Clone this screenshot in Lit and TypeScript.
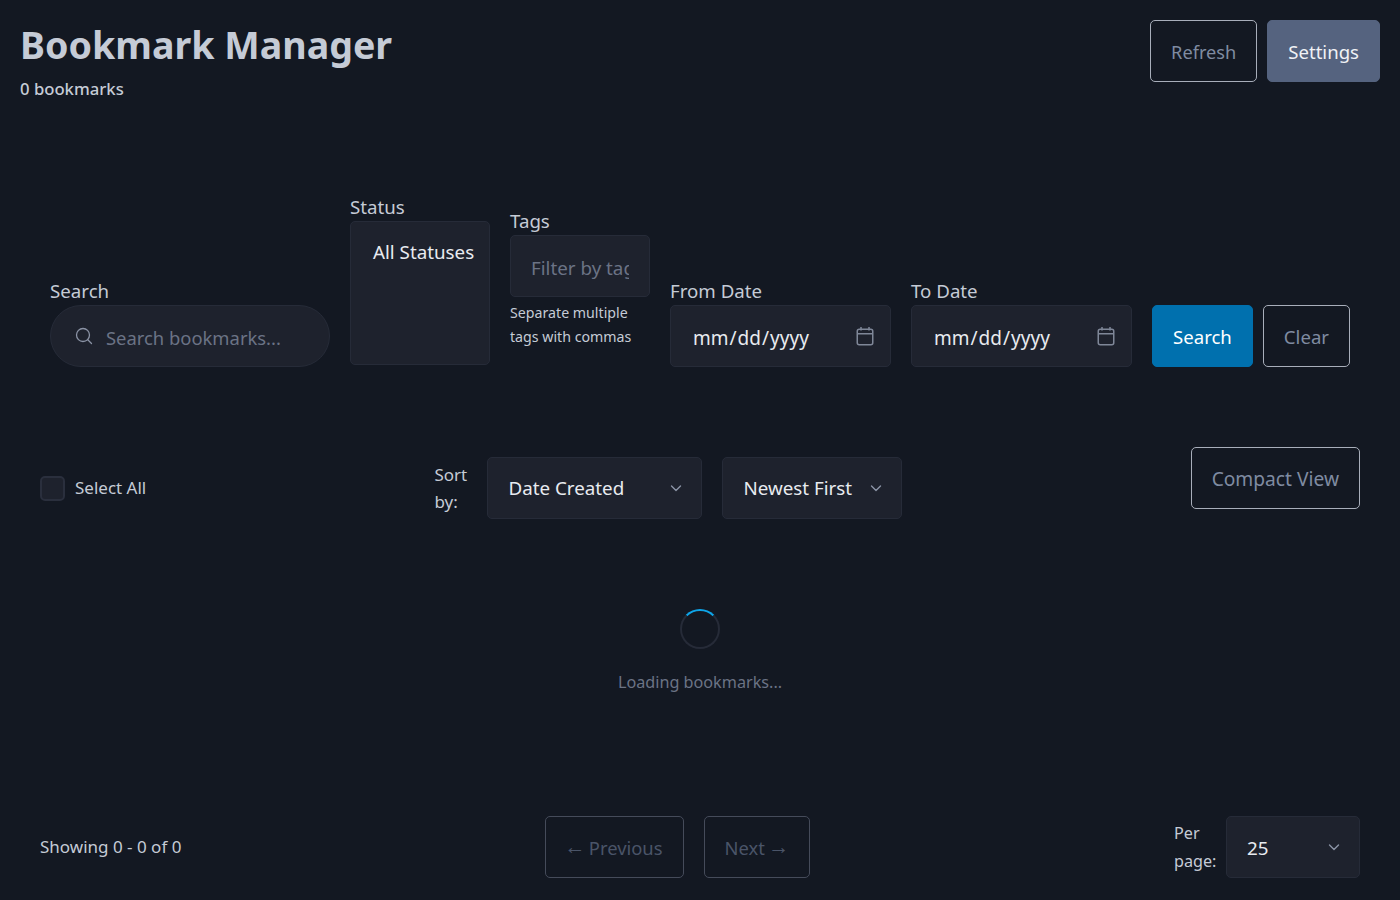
import {css, html, LitElement} from 'lit';
import {customElement} from 'lit/decorators.js';

const chevron = html`
  <svg class="chevron" viewBox="0 0 16 16" width="16" height="16" fill="none" stroke="currentColor" stroke-width="1.4" stroke-linecap="round" stroke-linejoin="round" aria-hidden="true">
    <path d="M3.5 6l4.5 4.5L12.5 6"/>
  </svg>
`;

// Outlined calendar that replaces the native date picker indicator.
const calendar = html`
  <svg class="calendar" viewBox="0 0 18 20" width="18" height="20" fill="none" stroke="currentColor" stroke-width="1.5" aria-hidden="true">
    <rect x="1.25" y="3.25" width="15.5" height="15.5" rx="2"/>
    <path d="M1.25 7.75h15.5M5 1v3.5M13 1v3.5"/>
  </svg>
`;

@customElement('app-root')
export class AppRoot extends LitElement {
  static styles = css`
    :host {
      display: block;
      height: 900px;
      overflow: hidden;
      box-sizing: border-box;
      background: #131822;
      color: #c5cbd6;
      font-family: "Noto Sans", "Open Sans", sans-serif;
      font-size: 17px;
      color-scheme: dark;
    }

    * {
      box-sizing: border-box;
    }

    .header {
      display: flex;
      justify-content: space-between;
      align-items: flex-start;
      padding: 20px 20px 0;
    }

    h1 {
      margin: 0;
      font-size: 37.6px;
      line-height: 50px;
      font-weight: 700;
      color: #c5cbd6;
    }

    .count {
      margin: 0;
      font-size: 16.7px;
      line-height: 38px;
      font-weight: 500;
      color: #c5cbd6;
    }

    .actions {
      display: flex;
      gap: 10px;
    }

    .btn {
      height: 62px;
      padding: 1px 20px 0;
      border: 1px solid #a8aeba;
      border-radius: 5px;
      background: transparent;
      color: #7f8ba1;
      font: inherit;
      font-size: 18.6px;
      white-space: nowrap;
    }

    .btn.refresh {
      font-size: 18.2px;
    }

    .btn.settings {
      background: #55637f;
      border-color: #55637f;
      color: #f0f2f6;
    }

    .btn.primary {
      background: #0070ae;
      border-color: #0070ae;
      color: #fff;
    }

    .btn.compact {
      font-size: 19.2px;
    }

    .btn.disabled {
      border-color: #454b5a;
      color: #4a5468;
      font-size: 18.4px;
    }

    .btn.next {
      padding-right: 21px;
    }

    .arrow {
      margin: 0 -1.5px;
      font-family: "Liberation Sans", sans-serif;
      font-size: 21px;
      vertical-align: 1.5px;
      line-height: 1;
    }

    .filters {
      display: flex;
      align-items: flex-end;
      gap: 20px;
      margin-top: 85px;
      padding: 0 50px;
    }

    .field {
      display: flex;
      flex-direction: column;
    }

    label {
      font-size: 18.7px;
      line-height: 28px;
      color: #c5cbd6;
    }

    input,
    select {
      height: 62px;
      border: 1px solid #262b38;
      border-radius: 5px;
      background: #1e222d;
      color: #e8ebf0;
      font: inherit;
      font-size: 18.8px;
      outline: none;
    }

    input {
      padding: 3px 20px 0;
    }

    input::placeholder {
      color: #6b7385;
      opacity: 1;
    }

    .search-box {
      position: relative;
      width: 280px;
    }

    .search-box input {
      width: 100%;
      padding-left: 55px;
      border-radius: 31px;
      font-size: 18.4px;
    }

    .search-icon {
      position: absolute;
      left: 25px;
      top: 22px;
      color: #8b93a5;
    }

    .status-list {
      width: 140px;
      height: 144px;
      margin-bottom: 2px;
      padding: 17px 20px 12px;
      overflow: hidden;
    }

    .status-list option {
      line-height: 24px;
      color: #e8ebf0;
      background: transparent;
    }

    .tags-input {
      width: 140px;
    }

    .hint {
      width: 140px;
      margin: 4px 0 18px;
      font-size: 14.2px;
      line-height: 24px;
      color: #c5cbd6;
    }

    .date-box {
      position: relative;
      width: 221px;
      color: #7f8798;
    }

    .date-box input {
      width: 100%;
      padding-left: 21px;
      font-size: 19px;
    }

    .date-box input::-webkit-calendar-picker-indicator {
      opacity: 0;
    }

    .calendar {
      position: absolute;
      right: 17px;
      top: 21px;
      pointer-events: none;
    }

    .form-actions {
      display: flex;
      gap: 10px;
    }

    .toolbar {
      display: flex;
      justify-content: space-between;
      align-items: flex-start;
      margin-top: 80px;
      padding: 0 40px;
    }

    .select-all {
      display: flex;
      align-items: center;
      gap: 10px;
      height: 62px;
      margin-top: 10px;
    }

    .select-all .text {
      padding-bottom: 2px;
    }

    .box {
      width: 25px;
      height: 25px;
      border: 2px solid #2a2f3d;
      border-radius: 5px;
      background: #1e222d;
    }

    .sort {
      display: flex;
      align-items: center;
      gap: 20px;
      margin-top: 10px;
    }

    .wrap-label {
      width: 33px;
      line-height: 27px;
    }

    .select-wrap {
      position: relative;
      color: #8b93a5;
    }

    .select-wrap select {
      display: block;
      width: 100%;
      appearance: none;
      padding: 0 40px 0 20px;
    }

    .chevron {
      position: absolute;
      right: 18px;
      top: 23px;
      pointer-events: none;
    }

    .loading {
      display: flex;
      flex-direction: column;
      align-items: center;
      margin-top: 90px;
    }

    .spinner {
      width: 40px;
      height: 40px;
      border: 2px solid #262b38;
      border-top-color: #0ea5e9;
      border-radius: 50%;
    }

    .loading p {
      margin: 19px 0 0;
      font-size: 16.2px;
      line-height: 28px;
      color: #6b7385;
    }

    .pager {
      display: flex;
      align-items: center;
      margin-top: 120px;
      padding: 0 40px;
    }

    .showing {
      flex: none;
      width: 505px;
      padding-bottom: 2px;
    }

    .pages {
      display: flex;
      flex: none;
      gap: 20px;
    }

    .per-page {
      display: flex;
      flex: none;
      align-items: center;
      gap: 10px;
      margin-left: auto;
      font-size: 16.2px;
    }

    .per-page .wrap-label {
      width: 42px;
      line-height: 28px;
    }

    .per-page select {
      padding-top: 2px;
    }
  `;

  render() {
    return html`
      <header class="header">
        <div>
          <h1>Bookmark Manager</h1>
          <p class="count">0 bookmarks</p>
        </div>
        <div class="actions">
          <button class="btn refresh">Refresh</button>
          <button class="btn settings">Settings</button>
        </div>
      </header>

      <form class="filters">
        <div class="field">
          <label>Search</label>
          <div class="search-box">
            <svg class="search-icon" viewBox="0 0 18 18" width="18" height="18" fill="none" stroke="currentColor" stroke-width="1.3" stroke-linecap="round" aria-hidden="true">
              <circle cx="8" cy="8" r="6.5"/>
              <path d="M12.8 12.8l3.7 3.7"/>
            </svg>
            <input type="text" placeholder="Search bookmarks..." />
          </div>
        </div>
        <div class="field">
          <label>Status</label>
          <select class="status-list" multiple>
            <option>All Statuses</option>
          </select>
        </div>
        <div class="field">
          <label>Tags</label>
          <input class="tags-input" type="text" placeholder="Filter by tags" />
          <div class="hint">Separate multiple tags with commas</div>
        </div>
        <div class="field">
          <label>From Date</label>
          <div class="date-box">
            <input type="date" />
            ${calendar}
          </div>
        </div>
        <div class="field">
          <label>To Date</label>
          <div class="date-box">
            <input type="date" />
            ${calendar}
          </div>
        </div>
        <div class="form-actions">
          <button class="btn primary" type="button">Search</button>
          <button class="btn" type="button">Clear</button>
        </div>
      </form>

      <section class="toolbar">
        <div class="select-all">
          <span class="box"></span>
          <span class="text">Select All</span>
        </div>
        <div class="sort">
          <span class="wrap-label">Sort by:</span>
          <div class="select-wrap" style="width:215px">
            <select><option>Date Created</option></select>
            ${chevron}
          </div>
          <div class="select-wrap" style="width:180px">
            <select><option>Newest First</option></select>
            ${chevron}
          </div>
        </div>
        <button class="btn compact">Compact View</button>
      </section>

      <section class="loading">
        <div class="spinner"></div>
        <p>Loading bookmarks...</p>
      </section>

      <footer class="pager">
        <div class="showing">Showing 0 - 0 of 0</div>
        <div class="pages">
          <button class="btn disabled"><span class="arrow">←</span> Previous</button>
          <button class="btn disabled next">Next <span class="arrow">→</span></button>
        </div>
        <div class="per-page">
          <span class="wrap-label">Per page:</span>
          <div class="select-wrap" style="width:134px">
            <select><option>25</option></select>
            ${chevron}
          </div>
        </div>
      </footer>
    `;
  }
}
